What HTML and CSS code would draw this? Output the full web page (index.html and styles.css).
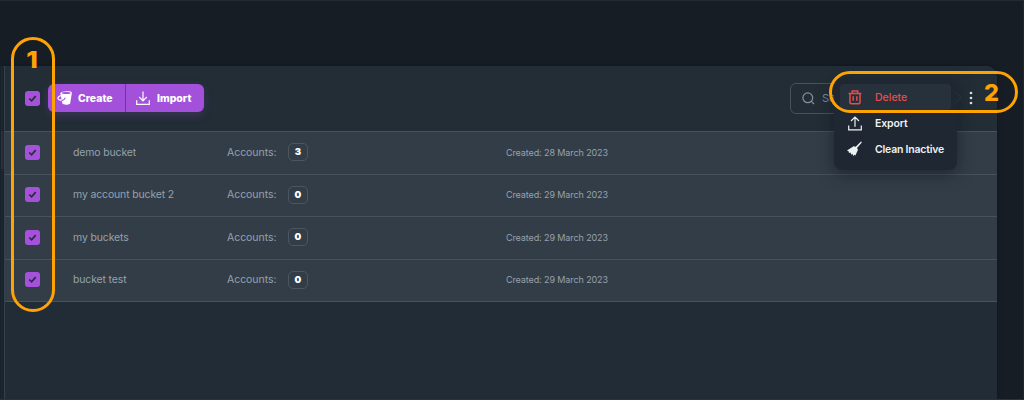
FILE: index.html
```html
<!DOCTYPE html>
<html lang="en">
<head>
<meta charset="utf-8">
<title>Buckets</title>
<link rel="stylesheet" href="styles.css">
</head>
<body>
<svg width="0" height="0" class="defs"><defs>
<symbol id="check" viewBox="0 0 15 15"><path d="M4.3 7.5 6.6 9.8 10.7 5.1" fill="none" stroke="#272d3a" stroke-width="1.7"/></symbol>
</defs></svg>
<div class="page">
  <div class="rail"><div class="rail-active"></div></div>
  <main class="panel">
    <header class="toolbar">
      <span class="check"><svg width="15" height="15"><use href="#check"/></svg></span>
      <div class="buttons">
        <button class="btn create"><svg width="16" height="16" viewBox="0 0 16 16"><path d="M3.4 3.2C3.8 1 14.9.3 14.9 2.7L13.2 13.2C12.8 15 6.4 15.2 5.4 13.6L4.4 9Z" fill="#fff"/><ellipse cx="9.2" cy="2.9" rx="4.4" ry="1" fill="#a551dc"/><path d="M4.6 10.6C6.8 10.3 7.8 9.2 8.4 7.6" fill="none" stroke="#a551dc" stroke-width="1.1"/><path d="M3.8 5.6C1.6 6.4.5 7.8 1.3 9 2 10 3.3 10.2 4.6 9.8" fill="none" stroke="#fff" stroke-width="1.3"/></svg><span>Create</span></button>
        <button class="btn import"><svg width="14" height="15" viewBox="0 0 14 15"><path d="M7 .6V9.5M3.2 6 7 9.8 10.8 6M.7 9.2V13.3H13.3V9.2" fill="none" stroke="#fff" stroke-width="1.2"/></svg><span>Import</span></button>
      </div>
      <div class="search"><svg width="13" height="13" viewBox="0 0 13 13"><circle cx="5.8" cy="5.8" r="4.9" fill="none" stroke="#84919e" stroke-width="1.2"/><path d="M9.4 9.4 12 12" stroke="#84919e" stroke-width="1.2"/></svg><span>Search</span></div>
      <svg class="dots" width="4" height="14" viewBox="0 0 4 14"><g fill="#d9dfe3"><circle cx="2" cy="2" r="1.35"/><circle cx="2" cy="7" r="1.35"/><circle cx="2" cy="12" r="1.35"/></g></svg>
    </header>
    <section class="rows">
      <div class="row"><span class="check"><svg width="15" height="15"><use href="#check"/></svg></span><span class="name n1">demo bucket</span><span class="label">Accounts:</span><b class="count">3</b><span class="date">Created: 28 March 2023</span></div>
      <div class="row"><span class="check"><svg width="15" height="15"><use href="#check"/></svg></span><span class="name n2">my account bucket 2</span><span class="label">Accounts:</span><b class="count">0</b><span class="date">Created: 29 March 2023</span></div>
      <div class="row"><span class="check"><svg width="15" height="15"><use href="#check"/></svg></span><span class="name n3">my buckets</span><span class="label">Accounts:</span><b class="count">0</b><span class="date">Created: 29 March 2023</span></div>
      <div class="row"><span class="check"><svg width="15" height="15"><use href="#check"/></svg></span><span class="name n4">bucket test</span><span class="label">Accounts:</span><b class="count">0</b><span class="date">Created: 29 March 2023</span></div>
    </section>
  </main>
  <div class="menu">
    <span class="arrow"></span>
    <div class="item delete"><svg width="14" height="15" viewBox="0 0 14 15"><path d="M.6 3.4H13.4M4.3 3.2V.9H9.7V3.2M2 3.6V12.5Q2 13.8 3.2 13.8H10.8Q12 13.8 12 12.5V3.6M5.2 6.2V10.8M8.8 6.2V10.8" fill="none" stroke="currentColor" stroke-width="1.5"/></svg><span>Delete</span></div>
    <div class="item export"><svg width="14" height="15" viewBox="0 0 14 15"><path d="M7 10.7V1.2M3 5 7 1 11 5M.7 9.5V13.8H13.3V9.5" fill="none" stroke="currentColor" stroke-width="1.2"/></svg><span>Export</span></div>
    <div class="item clean"><svg width="15" height="16" viewBox="0 0 15 16"><path d="M14 .6Q15 .7 14.6 1.7L10 7 11 8.7 8.4 14.5 7.2 13.8 6.5 15.2 5.4 12.8 4.2 13.7 3.5 11.6 1.9 12 1.8 10.5 0 9.5 6.6 5.2 8.7 5.8Z" fill="currentColor"/></svg><span>Clean Inactive</span></div>
  </div>
  <div class="callout one"><span>1</span></div>
  <div class="callout two"><span>2</span></div>
</div>
</body>
</html>
```
FILE: styles.css
```css
* { box-sizing: border-box; }
body { margin: 0; background: #171d25; font-family: Inter, "Liberation Sans", sans-serif; }
.defs { position: absolute; }
svg { display: block; flex: none; }
.page { position: relative; width: 1024px; height: 400px; overflow: hidden; display: flex; background: #171d25; border-top: 1px solid #242a32; border-right: 1px solid #20262e; border-bottom: 1px solid #2a323c; padding-top: 65px; }
.rail { width: 4px; background: #202b34; border-left: 1px solid #1b242d; padding-top: 65px; }
.rail-active { height: 38px; background: #353449; }
.panel { width: 993px; height: 334px; border-left: 1px solid #35434c; border-radius: 0 11px 0 0; background: #222c36; box-shadow: 0 0 5px #11171e; overflow: hidden; }
.toolbar { height: 65px; padding: 0 24px 1px 20px; display: flex; align-items: center; background: #222d36; }
.check { width: 15px; height: 15px; border-radius: 3px; background: #a551dc; flex: none; }
.buttons { display: flex; height: 28px; margin-left: 8px; border-radius: 6px; background: #a351da; box-shadow: 0 3px 10px #a351da38; }
.btn { display: flex; align-items: center; border: 0; padding: 0; background: none; color: #fff; font: 800 10.5px Inter, sans-serif; letter-spacing: -.03px; white-space: nowrap; }
.create { width: 78px; padding-left: 9px; gap: 5px; border-right: 1px solid #7432a5; }
.import { width: 78px; padding-left: 10px; gap: 7px; }
.search { width: 150px; height: 31px; margin-left: auto; margin-right: 29px; padding-left: 11px; border: 1px solid #46525e; border-radius: 6px; display: flex; align-items: center; gap: 7px; color: #7c8997; font-size: 11px; }
.row { height: 42.5px; border-top: 1px solid #46525c; padding: 0 0 1px 20px; display: flex; align-items: center; background: #333d47; color: #96a2ad; font-size: 10.5px; white-space: nowrap; }
.row:last-child { border-bottom: 1px solid #46525c; height: 43.5px; }
.name { width: 154px; margin-left: 33px; letter-spacing: -.15px; }
.label { width: 61px; letter-spacing: -.05px; }
.count { width: 20px; height: 18px; border: 1px solid #4b5661; border-radius: 5px; font-size: 9.5px; font-weight: 900; line-height: 16px; text-align: center; color: #fff; }
.date { margin-left: 198px; font-size: 9px; letter-spacing: -.1px; }
.menu { position: absolute; left: 834px; top: 78px; width: 123px; height: 91px; padding: 5px 6px; background: #1f2832; border-radius: 8px; color: #eef1f3; box-shadow: 0 4px 16px #0e151d8c; }
.item { position: relative; height: 26px; padding-left: 8px; display: flex; align-items: center; gap: 13px; border-radius: 4px; font-size: 10.5px; font-weight: 600; letter-spacing: -.15px; white-space: nowrap; }
.delete { background: #27313b; color: #e64d4b; font-weight: 500; letter-spacing: 0; }
.clean { padding-left: 7px; letter-spacing: -.22px; }
.arrow { position: absolute; left: 117px; top: 14px; width: 9px; height: 9px; background: #1f2832; border-top: 1px solid #29343d; border-right: 1px solid #29343d; transform: rotate(45deg); }
.callout { position: absolute; border: 3px solid #ffa305; border-radius: 22px; color: #ffa305; font: 800 23.5px Inter, sans-serif; }
.one { left: 11px; top: 36px; width: 44px; height: 275px; padding: 6px 0 0 13px; }
.two { left: 829px; top: 70px; width: 189px; height: 42px; padding: 5px 0 0 152px; }
.callout span { display: block; width: 14px; line-height: 27px; }
.one span { width: 11px; transform: scaleX(1.12); }
```
